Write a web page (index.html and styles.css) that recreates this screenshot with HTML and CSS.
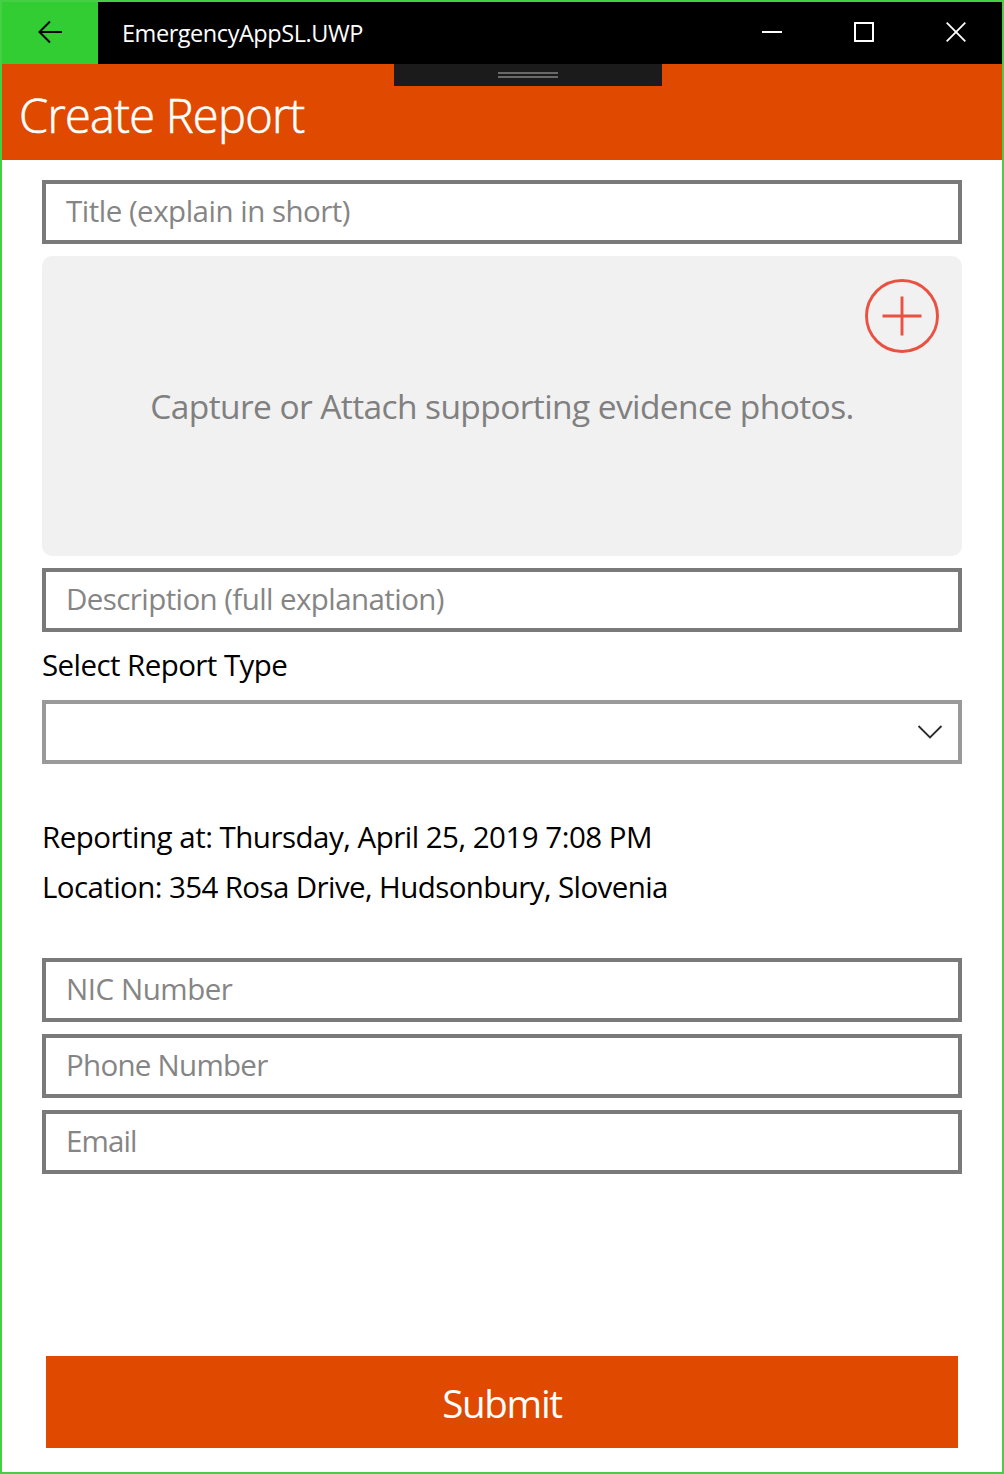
FILE: index.html
```html
<!DOCTYPE html>
<html lang="en">
<head>
<meta charset="utf-8">
<title>EmergencyAppSL.UWP</title>
<link rel="stylesheet" href="styles.css">
</head>
<body>
<div class="window">
  <header class="titlebar">
    <button class="back" aria-label="Back">
      <svg width="28" height="24" viewBox="0 0 28 24"><path d="M26 12H3.500M14 1.500L3.500 12L14 22.500"/></svg>
    </button>
    <span class="app-name">EmergencyAppSL.UWP</span>
    <div class="controls">
      <button class="control" aria-label="Minimize"><svg width="20" height="20" viewBox="0 0 20 20"><path d="M0 10H20"/></svg></button>
      <button class="control" aria-label="Maximize"><svg width="20" height="20" viewBox="0 0 20 20"><path d="M1 1H19V19H1Z"/></svg></button>
      <button class="control" aria-label="Close"><svg class="close" width="20" height="20" viewBox="0 0 20 20"><path d="M.7 .7L19.300 19.300M19.300 .7L.7 19.300"/></svg></button>
    </div>
  </header>
  <div class="page-header">
    <div class="debug-handle"><i class="grip"></i><i class="grip"></i></div>
    <h1 class="page-title">Create Report</h1>
  </div>
  <main class="form">
    <div class="field"><span class="ph-title">Title (explain in short)</span></div>
    <div class="photos">
      <span class="photos-hint">Capture or Attach supporting evidence photos.</span>
      <button class="add" aria-label="Add photo">
        <svg width="76" height="76" viewBox="0 0 76 76"><circle cx="38" cy="38" r="35.500"/><path d="M18.500 38H57.500M38 18.500V57.500"/></svg>
      </button>
    </div>
    <div class="field"><span class="ph-description">Description (full explanation)</span></div>
    <div class="label"><span class="label-type">Select Report Type</span></div>
    <div class="select">
      <svg width="26" height="16" viewBox="0 0 26 16"><path d="M1.500 2L13 13.500L24.500 2"/></svg>
    </div>
    <div class="details">
      <div class="detail"><span class="detail-time">Reporting at: Thursday, April 25, 2019 7:08 PM</span></div>
      <div class="detail"><span class="detail-place">Location: 354 Rosa Drive, Hudsonbury, Slovenia</span></div>
    </div>
    <div class="field"><span class="ph-nic">NIC Number</span></div>
    <div class="field"><span class="ph-phone">Phone Number</span></div>
    <div class="field"><span class="ph-email">Email</span></div>
    <button class="submit"><span class="submit-text">Submit</span></button>
  </main>
</div>
</body>
</html>
```

FILE: styles.css
```css
* { box-sizing: border-box; }
body {
  margin: 0;
  background: #fff;
  font-family: "Open Sans", "Noto Sans", sans-serif;
}
button {
  border: 0;
  padding: 0;
  font: inherit;
  background: none;
  color: inherit;
}
svg { display: block; fill: none; stroke: currentColor; stroke-width: 2; }
span { white-space: nowrap; }
.window {
  width: 1004px;
  height: 1474px;
  border: 2px solid #45cf45;
  display: flex;
  flex-direction: column;
}
.titlebar {
  height: 62px;
  display: flex;
  align-items: center;
  background: #000;
  color: #fff;
}
.back {
  width: 96px;
  height: 62px;
  display: flex;
  align-items: center;
  justify-content: center;
  padding-bottom: 2px;
  background: #32cd32;
  color: #000;
}
.app-name {
  margin-left: 24px;
  font-size: 23.500px;
  line-height: 60px;
  letter-spacing: -0.450px;
}
.controls { margin-left: auto; display: flex; padding-bottom: 2px; }
.control {
  width: 92px;
  height: 60px;
  display: flex;
  align-items: center;
  justify-content: center;
}
.close { stroke-width: 1.800; }
.page-header {
  position: relative;
  height: 96px;
  padding-left: 17px;
  background: #e04a00;
  color: #fff;
}
.page-title {
  margin: 0;
  width: max-content;
  font-size: 47px;
  font-weight: 300;
  line-height: 102px;
  letter-spacing: -0.750px;
  -webkit-text-stroke: 0.600px #fff;
}
.debug-handle {
  position: absolute;
  top: 0;
  left: 392px;
  width: 268px;
  height: 22px;
  padding-top: 8px;
  display: flex;
  flex-direction: column;
  align-items: center;
  gap: 2px;
  background: #1b1b1b;
}
.grip { width: 60px; height: 2px; background: #696969; }
.form {
  flex: 1;
  padding: 20px 40px 24px;
  display: flex;
  flex-direction: column;
  font-size: 29.500px;
}
.field {
  height: 64px;
  margin-bottom: 12px;
  padding: 0 20px 2px;
  border: 4px solid #7a7a7a;
  line-height: 54px;
  color: #858585;
}
.ph-title { letter-spacing: -0.500px; }
.ph-description { letter-spacing: -0.580px; }
.ph-nic { letter-spacing: -0.450px; }
.ph-phone { letter-spacing: -0.720px; }
.ph-email { letter-spacing: -0.900px; }
.photos {
  position: relative;
  height: 300px;
  margin-bottom: 12px;
  border-radius: 10px;
  display: flex;
  align-items: center;
  justify-content: center;
  background: #f1f1f1;
  color: #808080;
}
.photos-hint { font-size: 33.500px; letter-spacing: -0.590px; }
.add {
  position: absolute;
  top: 22px;
  right: 22px;
  color: #ea5141;
}
.add svg { stroke-width: 2.900; }
.label { height: 56px; line-height: 42px; }
.label-type { letter-spacing: -0.570px; }
.select {
  height: 64px;
  padding: 0 15px 0 20px;
  border: 4px solid #999;
  display: flex;
  align-items: center;
  justify-content: flex-end;
  color: #2b2b2b;
}
.select svg { stroke-width: 1.800; }
.details { height: 194px; padding-top: 48px; }
.detail { height: 50px; line-height: 50px; }
.detail-time { letter-spacing: -0.510px; }
.detail-place { letter-spacing: -0.600px; }
.submit {
  height: 92px;
  margin: auto 4px 0;
  padding-top: 3px;
  background: #e04a00;
  color: #fff;
  font-size: 38.500px;
  line-height: 89px;
}
.submit-text { letter-spacing: -1.300px; }
```
